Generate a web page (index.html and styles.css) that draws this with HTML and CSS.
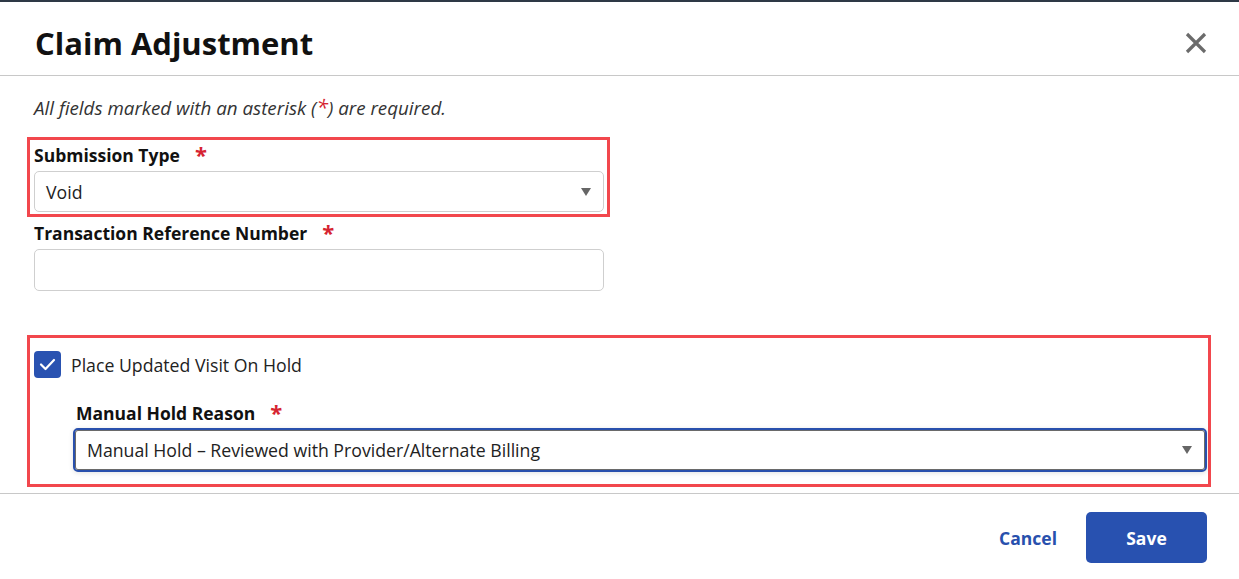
FILE: index.html
```html
<!DOCTYPE html>
<html lang="en">
<head>
<meta charset="utf-8">
<title>Claim Adjustment</title>
<link rel="stylesheet" href="styles.css">
</head>
<body>
<div class="dialog">
  <header class="header">
    <h1 class="title">Claim Adjustment</h1>
    <button class="close" aria-label="Close">
      <svg width="22" height="22" viewBox="0 0 22 22"><path d="M2 2 L20 20 M20 2 L2 20" stroke="#6b6b6b" stroke-width="3.2" stroke-linecap="butt"/></svg>
    </button>
  </header>
  <main class="content">
    <p class="note">All fields marked with an asterisk (<span class="req">*</span>) are required.</p>

    <div class="hl hl-one">
      <label class="label">Submission Type<span class="ast">*</span></label>
      <div class="select">
        <span>Void</span>
        <span class="caret"></span>
      </div>
    </div>

    <div class="field">
      <label class="label">Transaction Reference Number<span class="ast">*</span></label>
      <div class="input"></div>
    </div>

    <div class="hl hl-two">
      <div class="check-row">
        <span class="checkbox">
          <svg width="17" height="13" viewBox="0 0 17 13"><path d="M2 6.5 L6.5 11 L15 2" fill="none" stroke="#fff" stroke-width="2.2" stroke-linecap="round" stroke-linejoin="round"/></svg>
        </span>
        <span class="check-label">Place Updated Visit On Hold</span>
      </div>
      <div class="sub">
        <label class="label sub-label">Manual Hold Reason<span class="ast">*</span></label>
        <div class="select focused">
          <span>Manual Hold – Reviewed with Provider/Alternate Billing</span>
          <span class="caret"></span>
        </div>
      </div>
    </div>
  </main>
  <footer class="footer">
    <button class="btn-link">Cancel</button>
    <button class="btn-primary">Save</button>
  </footer>
</div>
</body>
</html>
```

FILE: styles.css
```css
* { box-sizing: border-box; }
html, body { margin: 0; padding: 0; background: #fff; }
body {
  font-family: "Open Sans", "Noto Sans", sans-serif;
  color: #222;
  width: 1239px;
  height: 579px;
  overflow: hidden;
}
.dialog { width: 1239px; }

.header {
  display: flex;
  justify-content: space-between;
  align-items: center;
  height: 76px;
  padding: 8px 32px 0 35px;
  border-top: 2px solid #2e3946;
  border-bottom: 1px solid #c8c8c8;
}
.title {
  margin: 0;
  font-size: 31px;
  font-weight: 700;
  color: #111;
  line-height: 40px;
}
.close {
  border: 0;
  background: none;
  padding: 0;
  width: 22px;
  height: 22px;
  display: flex;
}

.content {
  padding: 20px 28px 6px 34px;
}
.note {
  margin: 0 0 18px;
  font-size: 18.8px;
  line-height: 22px;
  font-style: italic;
  color: #333;
}
.req { color: #d62431; font-size: 21px; }

.hl {
  border: 3px solid #f2474d;
  margin-left: -7px;
}
.hl-one {
  width: 583px;
  padding: 4px 3px 2px 4px;
}
.label {
  display: block;
  font-size: 17.5px;
  font-weight: 700;
  line-height: 22px;
  color: #111;
  margin-bottom: 5px;
}
.ast {
  color: #d62431;
  font-size: 22px;
  margin-left: 15px;
  vertical-align: top;
  line-height: 20px;
}
.select {
  display: flex;
  align-items: center;
  justify-content: space-between;
  height: 41px;
  border: 1px solid #cfcfcf;
  border-radius: 5px;
  padding: 0 12px 0 11px;
  font-size: 17.7px;
  color: #222;
  background: #fff;
}
.caret {
  width: 0;
  height: 0;
  border-left: 5.5px solid transparent;
  border-right: 5.5px solid transparent;
  border-top: 8px solid #666;
}
.field { margin-top: 5px; width: 570px; }
.input {
  height: 42px;
  border: 1px solid #cfcfcf;
  border-radius: 5px;
}

.hl-two {
  margin-top: 44px;
  padding: 13px 1px 12px 4px;
}
.check-row {
  display: flex;
  align-items: center;
  gap: 10px;
  height: 27px;
}
.checkbox {
  width: 27px;
  height: 27px;
  border-radius: 4px;
  background: #2952b1;
  display: flex;
  align-items: center;
  justify-content: center;
}
.check-label {
  font-size: 17.7px;
  color: #222;
}
.sub {
  margin-top: 24px;
  padding-left: 39px;
}
.sub-label {
  padding-left: 3px;
  margin-bottom: 4px;
}
.select.focused {
  height: 44px;
  border: 2px solid #2950ad;
  box-shadow: inset 0 0 0 1px #6a6a6a, 0 1px 5px rgba(0,0,0,0.12);
  padding: 0 13px 0 12px;
}

.footer {
  display: flex;
  justify-content: flex-end;
  align-items: center;
  gap: 29px;
  border-top: 1px solid #c8c8c8;
  padding: 18px 32px 0 0;
}
.btn-link {
  border: 0;
  background: none;
  padding: 0;
  font-family: inherit;
  font-size: 17.5px;
  font-weight: 700;
  color: #2850ad;
}
.btn-primary {
  width: 121px;
  height: 51px;
  border: 0;
  border-radius: 5px;
  background: #2851b0;
  color: #fff;
  font-family: inherit;
  font-size: 17.5px;
  font-weight: 700;
}
```
